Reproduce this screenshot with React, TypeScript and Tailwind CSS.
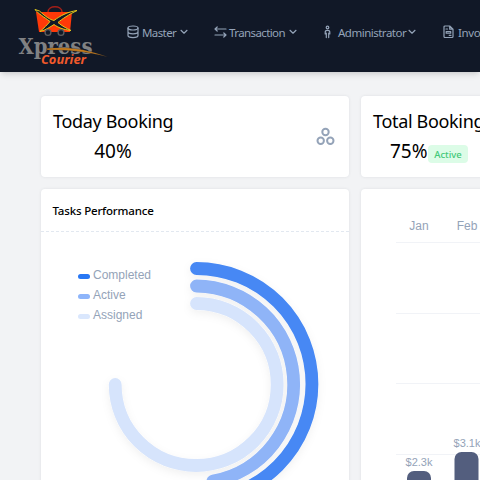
import React from "react";

function Logo() {
  return (
    <svg width="110" height="72" viewBox="0 0 110 72" className="block shrink-0">
      <path d="M48 12 C48 5 62 5 62 12" fill="none" stroke="#a51f18" strokeWidth="1.5" />
      <path d="M36 12 H72 L70 32 H39 Z" fill="#ff3908" />
      <path d="M35 9.5 L39.5 11 C46 17 50 19.5 54 20.5 C60 16 67 12 77 10.5 C69 14.5 62 19 58 22.5 C62 26 66 28 71 30.5 C63 29.5 58 27.5 54 24.5 C50 27 46 30 40 31.5 C44 28 47 25 50 21.5 C44 17 38 13.5 35 9.5 Z" fill="#111827" stroke="#e3c91b" strokeWidth="1" />
      <circle cx="48" cy="32.5" r="2.9" fill="#111827" stroke="#5a5c5e" strokeWidth="1.4" />
      <circle cx="61" cy="32.5" r="2.9" fill="#111827" stroke="#5a5c5e" strokeWidth="1.4" />
      <text x="18.5" y="54" textLength="74" lengthAdjust="spacingAndGlyphs" fontFamily="'DejaVu Serif', serif" fontWeight="700" fontSize="22.5" fill="#808183">Xpress</text>
      <path d="M47 48.3 C66 46.5 84 48 108 57 C84 51 66 49.8 47 50 Z" fill="#c77d1e" stroke="#111827" strokeWidth="0.3" />
      <text x="41" y="64" textLength="45" lengthAdjust="spacingAndGlyphs" fontFamily="'Open Sans', sans-serif" fontStyle="italic" fontWeight="700" fontSize="12" fill="#f15a2b">Courier</text>
    </svg>
  );
}

const stroke = { fill: "none", stroke: "currentColor", strokeLinecap: "round", strokeLinejoin: "round" } as const;

function Database() {
  return (
    <svg width="12" height="14" viewBox="0 0 12 14" className="-mt-0.5 shrink-0" {...stroke} strokeWidth="1.2">
      <ellipse cx="6" cy="3" rx="5" ry="2" />
      <path d="M1 3v7.6c0 1.1 2.2 2 5 2s5-.9 5-2V3M1 6.8c0 1.1 2.2 2 5 2s5-.9 5-2" />
    </svg>
  );
}

function Transfer() {
  return (
    <svg width="13" height="12" viewBox="0 0 13 12" className="-mt-0.5 shrink-0" {...stroke} strokeWidth="1.2">
      <path d="M12 3H1l2.2-2M1 3l2.2 2M1 9h11L9.8 7M12 9l-2.2 2" />
    </svg>
  );
}

function Person() {
  return (
    <svg width="7" height="14" viewBox="0 0 7 14" className="-mt-0.5 ml-px shrink-0" {...stroke} strokeWidth="1.2">
      <circle cx="3.5" cy="2.5" r="1.3" />
      <path d="M1.2 9V7.2C1.2 5.9 2 5.4 3.5 5.4S5.8 5.9 5.8 7.2V9M2.3 8V12.6M4.7 8V12.6" />
    </svg>
  );
}

function Invoice() {
  return (
    <svg width="11" height="14" viewBox="0 0 11 14" className="-mt-0.5 shrink-0" {...stroke} strokeWidth="1.2">
      <path d="M2 1h4.7L10 4.2V11.5a1 1 0 0 1-1 1H2a1 1 0 0 1-1-1V2a1 1 0 0 1 1-1ZM6.7 1v3.2H10M3 4h1.5M6.2 10.3H8M3.2 6.5h4.5v1.7H3.2Z" />
    </svg>
  );
}

function Chevron() {
  return (
    <svg width="8" height="6" viewBox="0 0 8 6" className="-mt-px shrink-0" {...stroke} strokeWidth="1.2">
      <path d="M1 1.3 4 4.2 7 1.3" />
    </svg>
  );
}

function Header() {
  return (
    <header className="flex h-[72px] w-full bg-[#111827] text-[#94a3b8] shadow-md">
      <Logo />
      <nav className="flex h-[65px] items-center whitespace-nowrap pl-[17px] text-[11.5px]">
        <div className="flex w-[87px] items-center">
          <Database />
          <span className="ml-[3px] w-[38px] pt-px tracking-[-0.6px]">Master</span>
          <Chevron />
        </div>
        <div className="flex w-[109px] items-center">
          <Transfer />
          <span className="ml-0.5 w-[60px] pt-px tracking-[-0.6px]">Transaction</span>
          <Chevron />
        </div>
        <div className="flex w-[120px] items-center">
          <Person />
          <span className="ml-[7px] w-[70px] pt-px tracking-[-0.5px]">Administrator</span>
          <Chevron />
        </div>
        <div className="flex items-center">
          <Invoice />
          <span className="ml-1 pt-px tracking-[-0.4px]">Invoice</span>
        </div>
      </nav>
    </header>
  );
}

const card = "rounded bg-white shadow-[0_0_3px_rgba(30,41,59,0.10)]";

function StatCards() {
  return (
    <>
      <section className={`${card} flex h-[81px] items-center justify-between pl-3 pr-[14px]`}>
        <div className="h-[81px] w-[120px] whitespace-nowrap pt-[11px] text-black">
          <h2 className="text-[18px] leading-7 tracking-[-0.33px]">Today Booking</h2>
          <p className="mt-0.5 text-center text-[19px] leading-7">40%</p>
        </div>
        <svg width="19" height="19" viewBox="0 0 19 19" fill="none" stroke="#94a3b8" strokeWidth="2">
          <circle cx="9.5" cy="5" r="3.2" />
          <circle cx="4.7" cy="13.7" r="3.2" />
          <circle cx="14.3" cy="13.7" r="3.2" />
        </svg>
      </section>
      <section className={`${card} h-[81px] whitespace-nowrap pl-3 pt-[11px] text-black`}>
        <h2 className="text-[18px] leading-7 tracking-[-0.33px]">Total Booking</h2>
        <div className="mt-0.5 flex pl-[17px]">
          <p className="w-[38px] text-[19px] leading-7">75%</p>
          <span className="mt-2 h-[18px] w-10 rounded bg-[#dcfce7] text-center text-[9.5px] font-medium leading-[19px] text-[#42c878]">Active</span>
        </div>
      </section>
    </>
  );
}

const legend = [
  ["Completed", "bg-[#2877f4]"],
  ["Active", "bg-[#8eb5fa]"],
  ["Assigned", "bg-[#dae7fd]"],
];

function Tasks() {
  return (
    <section className={`${card} h-[400px]`}>
      <h3 className="h-[43px] border-b border-dashed border-[#e2e8f0] pl-[11.5px] text-[11.5px] font-medium leading-[44px] tracking-[-0.18px] text-black">Tasks Performance</h3>
      <div className="relative h-[340px]">
        <svg className="absolute left-0 top-0" width="308" height="300" viewBox="41 232 308 300" fill="none" strokeWidth="12.8" strokeLinecap="round">
          <defs>
            <filter id="ringShadow" x="-20%" y="-20%" width="140%" height="140%">
              <feDropShadow dx="0" dy="3" stdDeviation="4" floodColor="#000" floodOpacity="0.06" />
            </filter>
          </defs>
          <g filter="url(#ringShadow)">
            <path d="M196.5 268.5A115.5 115.5 0 0 1 196.5 499.5" stroke="#4688f4" />
            <path d="M196.5 286A98.3 98.3 0 0 1 213 481" stroke="#8fb4f7" />
            <path d="M196.5 303.5A81 81 0 1 1 115.2 384.5" stroke="#d6e4fc" />
          </g>
        </svg>
        <ul className="absolute left-[37px] top-[33px] font-['Liberation_Sans',sans-serif] text-[12px] text-[#94a3b8]">
          {legend.map(([name, color]) => (
            <li key={name} className="flex h-5 items-center gap-[3px]">
              <i className={`mt-[3px] h-[5px] w-3 rounded-full ${color}`} />
              {name}
            </li>
          ))}
        </ul>
      </div>
    </section>
  );
}

function Chart() {
  return (
    <section className={`${card} h-[400px]`}>
      <svg width="308" height="400" viewBox="361 189 308 400" fontFamily="'Liberation Sans', sans-serif" fill="#94a3b8" textAnchor="middle">
        <path d="M396 242.5H660M396 313.5H660M396 383.5H660M396 454.5H660" stroke="#f1f3f7" />
        <g fontSize="12">
          <text x="419" y="230">Jan</text>
          <text x="467" y="230">Feb</text>
        </g>
        <g fontSize="11">
          <text x="419" y="466">$2.3k</text>
          <text x="467" y="447">$3.1k</text>
        </g>
        <rect x="407" y="471" width="24" height="100" rx="7" fill="#535e7e" />
        <rect x="454.5" y="452" width="24" height="120" rx="7" fill="#535e7e" />
      </svg>
    </section>
  );
}

export default function App() {
  return (
    <div className="h-[480px] w-[480px] overflow-hidden bg-[#f2f3f5] font-['Noto_Sans','Open_Sans',sans-serif]">
      <Header />
      <main className="grid grid-cols-[308px_308px] gap-3 pl-[41px] pt-6">
        <StatCards />
        <Tasks />
        <Chart />
      </main>
    </div>
  );
}
